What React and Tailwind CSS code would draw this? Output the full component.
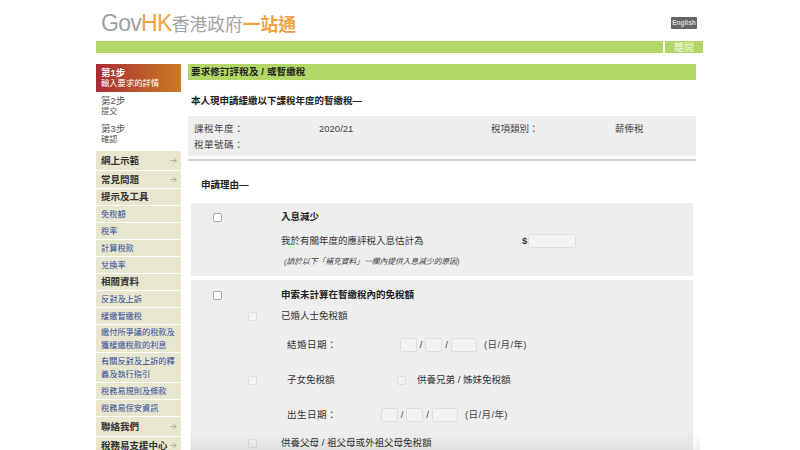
import React from 'react'
import { ArrowRight } from 'lucide-react'

const font = { fontFamily: '"Liberation Sans", "Noto Sans CJK TC", sans-serif' }

const menu = [
  { label: '網上示範', type: 'head', arrow: true, h: 'h-[20px]' },
  { label: '常見問題', type: 'head', arrow: true, h: 'h-[18px]' },
  { label: '提示及工具', type: 'head', h: 'h-[17px]' },
  { label: '免稅額', h: 'h-[17px]' },
  { label: '稅率', h: 'h-[17px]' },
  { label: '計算稅款', h: 'h-[17px]' },
  { label: '兌換率', h: 'h-[17px]' },
  { label: '相關資料', type: 'head', h: 'h-[17px]' },
  { label: '反對及上訴', h: 'h-[17px]' },
  { label: '緩繳暫繳稅', h: 'h-[17px]' },
  { label: '繳付所爭議的稅款及獲緩繳稅款的利息', h: 'h-[28px]' },
  { label: '有關反對及上訴的釋義及執行指引', h: 'h-[30px]' },
  { label: '稅務易規則及條款', h: 'h-[17px]' },
  { label: '稅務易保安資訊', h: 'h-[17px]' },
  { label: '聯絡我們', type: 'head', arrow: true, h: 'h-[20px]' },
  { label: '稅務易支援中心', type: 'head', arrow: true, h: 'h-[18px]' },
]

function Box({ className = '' }) {
  return <span className={`block h-[9px] w-[9px] shrink-0 rounded-[2px] border ${className}`} />
}

function DateInputs({ className = '' }) {
  return (
    <div className={`flex items-center text-[9.5px] text-[#444] ${className}`}>
      <span className="h-[14px] w-[17px] rounded-[2px] border border-[#ddd] bg-[#f2f2f2]" />
      <span className="w-[8px] text-center">/</span>
      <span className="h-[14px] w-[17px] rounded-[2px] border border-[#ddd] bg-[#f2f2f2]" />
      <span className="w-[9px] text-center">/</span>
      <span className="h-[14px] w-[26px] rounded-[2px] border border-[#ddd] bg-[#f2f2f2]" />
      <span className="ml-[7px] tracking-[0.4px]">(日/月/年)</span>
    </div>
  )
}

export default function App() {
  return (
    <div style={font} className="relative h-[450px] w-[800px] overflow-hidden bg-white pl-[96px] text-[#333]">
      {/* Header */}
      <div className="flex h-[41px] items-start">
        <div className="ml-[5px] mt-[10px] flex w-[196px] items-baseline whitespace-nowrap leading-[26px]">
          <span className="text-[23px] tracking-[-0.7px] text-[#a0a0a0]">Gov</span>
          <span className="text-[23px] tracking-[-0.7px] text-[#efa33c]">HK</span>
          <span className="text-[17.75px] text-[#a3a3a3]">香港政府</span>
          <span className="text-[17.75px] font-bold text-[#efa33c]">一站通</span>
        </div>
        <span className="ml-[374px] mt-[17px] flex h-[12px] w-[26px] items-center justify-center rounded-[1px] bg-[#666] text-[6.5px] font-bold text-[#ddd]">
          English
        </span>
      </div>
      <div className="flex h-[12px] w-[607px] gap-[2px]">
        <div className="w-[567px] bg-[#b2d766]" />
        <div className="flex w-[38px] items-center justify-center bg-[#b2d766] text-[10px] text-[#eef6d8]">離開</div>
      </div>

      <div className="mt-[11px] flex gap-[7px]">
        {/* Sidebar */}
        <aside className="w-[85px] shrink-0">
          <div className="flex h-[28px] flex-col justify-center bg-gradient-to-r from-[#a92a34] to-[#c9791f] pl-[5px] leading-[11px] text-white">
            <span className="text-[9.5px] font-bold">第1步</span>
            <span className="text-[8.3px]">輸入要求的詳情</span>
          </div>
          <div className="pl-[5px] text-[#555]">
            <div className="flex h-[28px] flex-col justify-center leading-[11.5px]">
              <span className="text-[9.5px]">第2步</span>
              <span className="text-[8.3px]">提交</span>
            </div>
            <div className="flex h-[28px] flex-col justify-center leading-[11.5px]">
              <span className="text-[9.5px]">第3步</span>
              <span className="text-[8.3px]">確認</span>
            </div>
          </div>
          <nav className="mt-[3px]">
            {menu.map((item) => (
              <div
                key={item.label}
                className={`flex items-center border-b border-white bg-[#e9e6cf] pl-[5px] pr-[3px] ${item.h} ${item.type === 'head' ? '' : 'pt-[2px]'}`}
              >
                {item.type === 'head' ? (
                  <span className="flex-1 whitespace-nowrap text-[9.5px] font-bold leading-[12px] text-[#333]">{item.label}</span>
                ) : (
                  <span className="flex-1 text-[8.2px] leading-[12.5px] text-[#2f4b9b]">{item.label}</span>
                )}
                {item.arrow && <ArrowRight size={9} strokeWidth={1.6} className="shrink-0 text-[#888]" />}
              </div>
            ))}
          </nav>
        </aside>

        {/* Main */}
        <main className="w-[508px] shrink-0 text-[9.5px]">
          <div className="flex h-[16px] items-center bg-[#b2d766] pl-[3px] font-bold tracking-[0.15px] text-[#222]">要求修訂評稅及 / 或暫繳稅</div>
          <p className="ml-[3px] mt-[14px] h-[15px] font-bold leading-[14px] text-[#222]">本人現申請緩繳以下課稅年度的暫繳稅—</p>

          <div className="mt-[7px] grid h-[40px] grid-cols-[125px_172px_124px_1fr] content-center gap-y-[5px] bg-[#eeeeee] pl-[6px] leading-[11px] text-[#444]">
            <span className="tracking-[0.5px]">課稅年度：</span>
            <span>2020/21</span>
            <span>稅項類別：</span>
            <span>薪俸稅</span>
            <span className="tracking-[0.5px]">稅單號碼：</span>
            <span />
          </div>
          <div className="mt-[3px] h-[2px] bg-[#d0d0d0]" />

          <p className="ml-[13px] mt-[17px] h-[14px] font-bold leading-[14px] text-[#222]">申請理由—</p>

          {/* Panel: income */}
          <section className="ml-[3px] mt-[11px] h-[73px] w-[502px] bg-[#eeeeee] pl-[22px] pt-[9px]">
            <div className="flex h-[11px] items-center">
              <Box className="border-[#aaa] bg-white" />
              <span className="ml-[59px] font-bold text-[#222]">入息減少</span>
            </div>
            <div className="mt-[11px] flex h-[14px] items-center">
              <span className="ml-[68px] w-[241px] text-[#333]">我於有關年度的應評稅入息估計為</span>
              <span className="w-[6px] font-bold">$</span>
              <span className="h-[14px] w-[48px] rounded-[2px] border border-[#ddd] bg-[#f2f2f2]" />
            </div>
            <p className="ml-[71px] mt-[8px] text-[7.75px] italic leading-[11px] text-[#444]">(請於以下「補充資料」一欄內提供入息減少的原因)</p>
          </section>

          {/* Panel: allowances */}
          <section className="ml-[3px] mt-[4px] h-[170px] w-[502px] bg-[#eeeeee] pl-[22px] pt-[10px]">
            <div className="flex h-[11px] items-center">
              <Box className="border-[#aaa] bg-white" />
              <span className="ml-[59px] font-bold text-[#222]">申索未計算在暫繳稅內的免稅額</span>
            </div>
            <div className="ml-[35px] mt-[10px] flex h-[11px] items-center">
              <Box className="border-[#ddd] bg-[#f2f2f2]" />
              <span className="ml-[24px] text-[#333]">已婚人士免稅額</span>
            </div>
            <div className="ml-[74px] mt-[16px] flex h-[14px] items-center">
              <span className="w-[113px] tracking-[0.5px]">結婚日期：</span>
              <DateInputs />
            </div>
            <div className="ml-[35px] mt-[23px] flex h-[11px] items-center">
              <Box className="border-[#ddd] bg-[#f2f2f2]" />
              <span className="ml-[30px] w-[110px]">子女免稅額</span>
              <Box className="border-[#ddd] bg-[#f2f2f2]" />
              <span className="ml-[11px]">供養兄弟 / 姊妹免稅額</span>
            </div>
            <div className="ml-[74px] mt-[22px] flex h-[14px] items-center">
              <span className="w-[94px] tracking-[0.5px]">出生日期：</span>
              <DateInputs />
            </div>
            <div className="ml-[35px] mt-[16px] flex h-[11px] items-center">
              <Box className="border-[#ddd] bg-[#f2f2f2]" />
              <span className="ml-[24px]">供養父母 / 祖父母或外祖父母免稅額</span>
            </div>
          </section>
        </main>
      </div>

      {/* soft fade along the bottom edge */}
      <div className="pointer-events-none absolute bottom-0 left-[190px] right-[100px] h-[18px] bg-gradient-to-b from-transparent to-[#0000000f]" />
    </div>
  )
}
